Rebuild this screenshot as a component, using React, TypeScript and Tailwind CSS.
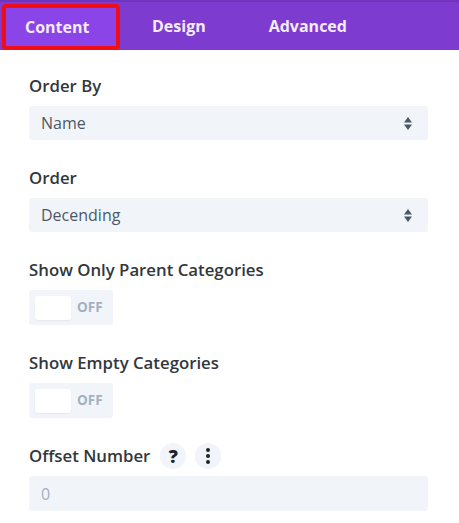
const font = { fontFamily: '"Open Sans", "Noto Sans", sans-serif' };

function SelectField({ label, value }: { label: string; value: string }) {
  return (
    <div className="flex flex-col">
      <div className="h-5 mb-[10px] flex items-center text-[16.8px] font-semibold text-[#32373c]">{label}</div>
      <div className="h-[34px] rounded-[3px] bg-[#f1f5f9] flex items-center justify-between pl-3 pr-[16px]">
        <span className="text-[16px] font-medium text-[#4c5866]">{value}</span>
        <svg width="8" height="13" viewBox="0 0 8 13">
          <path d="M4 0 L8 5.5 L0 5.5 Z" fill="#4c5866" />
          <path d="M0 7.5 L8 7.5 L4 13 Z" fill="#4c5866" />
        </svg>
      </div>
    </div>
  );
}

function ToggleField({ label }: { label: string }) {
  return (
    <div className="flex flex-col">
      <div className="h-5 mb-[10px] flex items-center text-[16.8px] font-semibold text-[#32373c]">{label}</div>
      <div className="h-[35px] w-[84px] rounded-[3px] bg-[#f1f5f9] flex items-center pl-[6px]">
        <div className="h-[24px] w-[36px] rounded-[3px] bg-white shadow-[0_1px_2px_rgba(0,0,0,0.06)]" />
        <span className="ml-[6px] text-[13.5px] font-bold text-[#a3b0c2]">OFF</span>
      </div>
    </div>
  );
}

export default function App() {
  return (
    <div className="w-[459px] h-[523px] bg-white overflow-hidden" style={font}>
      {/* tabs */}
      <div className="h-[50px] bg-[#7e3bd0] flex items-start border-t-2 border-[#6f33bd]">
        <div className="ml-[2px] mt-[2px] h-[46px] w-[118px] rounded-[4px] border-4 border-[#f00d18] bg-[#8b44e8] flex items-center pl-[19px] text-[16px] font-bold text-[#f3ecfd]">
          Content
        </div>
        <div className="ml-[32px] h-[48px] flex items-center text-[16px] font-bold text-[#f3ecfd]">Design</div>
        <div className="ml-[63px] h-[48px] flex items-center text-[16px] font-bold text-[#f3ecfd]">Advanced</div>
      </div>

      <div className="pt-[26px] pl-[29px] pr-[31px] flex flex-col gap-[28px]">
        <SelectField label="Order By" value="Name" />
        <SelectField label="Order" value="Decending" />
        <ToggleField label="Show Only Parent Categories" />
        <ToggleField label="Show Empty Categories" />

        <div className="flex flex-col">
          <div className="h-5 mb-[10px] flex items-center text-[16.8px] font-semibold text-[#32373c]">
            Offset Number
            <div className="ml-[10px] h-[26px] w-[26px] rounded-full bg-[#f1f5f9] flex items-center justify-center text-[18px] font-extrabold text-[#1f2329]">
              ?
            </div>
            <div className="ml-[9px] h-[26px] w-[26px] rounded-full bg-[#f1f5f9] flex items-center justify-center">
              <svg width="4" height="16" viewBox="0 0 4 16">
                <circle cx="2" cy="2" r="2" fill="#1f2329" />
                <circle cx="2" cy="8" r="2" fill="#1f2329" />
                <circle cx="2" cy="14" r="2" fill="#1f2329" />
              </svg>
            </div>
          </div>
          <div className="h-[35px] rounded-[3px] bg-[#f1f5f9] flex items-center pl-3 text-[16px] text-[#a3b0c2]">0</div>
        </div>
      </div>
    </div>
  );
}
